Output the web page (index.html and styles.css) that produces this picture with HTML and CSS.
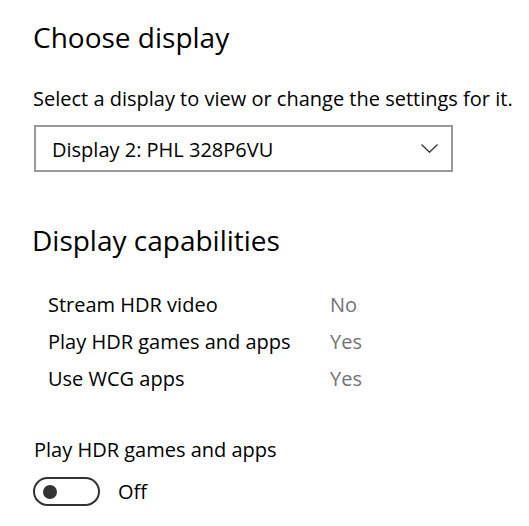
FILE: index.html
```html
<!DOCTYPE html>
<html lang="en">
<head>
<meta charset="UTF-8" />
<title>Display settings</title>
<link rel="stylesheet" href="styles.css">
</head>
<body>
  <div class="page">
    <h1 class="title">Choose display</h1>
    <p class="subtitle">Select a display to view or change the settings for it.</p>
    <div class="dropdown">
      <span>Display 2: PHL 328P6VU</span>
      <svg class="chevron" width="17" height="9" viewBox="0 0 17 9">
        <path d="M0.5 0.5 L8.5 8.3 L16.5 0.5" fill="none" stroke="#333" stroke-width="1.2" />
      </svg>
    </div>

    <h2 class="section">Display capabilities</h2>
    <div class="caps">
      <span>Stream HDR video</span><span class="value">No</span>
      <span>Play HDR games and apps</span><span class="value">Yes</span>
      <span>Use WCG apps</span><span class="value">Yes</span>
    </div>

    <p class="toggle-label">Play HDR games and apps</p>
    <div class="toggle-row">
      <div class="toggle"><div class="knob"></div></div>
      <span>Off</span>
    </div>
  </div>
</body>
</html>
```

FILE: styles.css
```css
body {
  margin: 0;
  background: #fff;
  color: #000;
  font-family: "Open Sans", "Noto Sans", sans-serif;
  font-size: 20px;
}

.page {
  padding: 19px 0 0 33px;
}

.title {
  margin: 0;
  font-size: 28px;
  font-weight: 400;
  line-height: 36px;
}

.subtitle {
  margin: 30px 0 0;
  line-height: 28px;
}

.dropdown {
  margin-top: 12px;
  margin-left: 1px;
  width: 419px;
  height: 47px;
  border: 2px solid #999;
  display: flex;
  align-items: center;
  justify-content: space-between;
  padding: 2px 13px 0 16px;
  box-sizing: border-box;
  line-height: 28px;
}

.chevron {
  display: block;
  margin-bottom: 3px;
}

.section {
  margin: 50px 0 0 -1px;
  font-size: 28px;
  font-weight: 400;
  line-height: 36px;
}

.caps {
  margin: 28px 0 0 15px;
  display: grid;
  grid-template-columns: 282px auto;
  line-height: 37px;
}

.caps .value {
  color: #737373;
}

.toggle-label {
  margin: 39px 0 0 1px;
  line-height: 28px;
}

.toggle-row {
  margin-top: 13px;
  display: flex;
  align-items: center;
  gap: 18px;
  line-height: 28px;
}

.toggle {
  width: 67px;
  height: 29px;
  border: 2px solid #333;
  border-radius: 15px;
  box-sizing: border-box;
  display: flex;
  align-items: center;
  padding-left: 8px;
}

.knob {
  width: 14px;
  height: 14px;
  border-radius: 50%;
  background: #333;
}
```
